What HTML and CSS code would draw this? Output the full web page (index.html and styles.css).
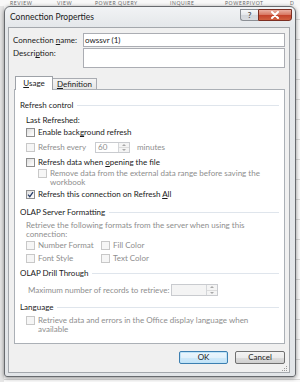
FILE: index.html
```html
<!DOCTYPE html>
<html>
<head>
<meta charset="utf-8">
<title>Connection Properties</title>
<link rel="stylesheet" href="styles.css">
</head>
<body>
<div class="screen">
  <div class="ribbon">
    <span>REVIEW</span><span>VIEW</span><span>POWER QUERY</span><span>INQUIRE</span><span>POWERPIVOT</span><span>D</span>
  </div>
  <div class="window">
    <div class="titlebar">
      <div class="title">Connection Properties</div>
      <div class="caption">
        <div class="cap-help">?</div>
        <div class="cap-close">
          <svg width="10" height="8" viewBox="0 0 10 8"><path d="M2 1 L8 7 M8 1 L2 7" stroke="#fff" stroke-width="2" stroke-linecap="round"/></svg>
        </div>
      </div>
    </div>
    <div class="client">
      <div class="field">
        <div class="label">Connection <u>n</u>ame:</div>
        <div class="textbox">owssvr (1)</div>
      </div>
      <div class="field desc">
        <div class="label">Descri<u>p</u>tion:</div>
        <div class="textbox tall"></div>
      </div>
      <div class="tabs">
        <div class="tab active"><u>U</u>sage</div>
        <div class="tab"><u>D</u>efinition</div>
      </div>
      <div class="panel">
        <div class="ghead first">Refresh control</div>
        <div class="row text-only r-last">Last Refreshed:</div>
        <div class="row r-bg"><span class="cb"></span><span>Enable back<u>g</u>round refresh</span></div>
        <div class="row r-every dis">
          <span class="cb"></span><span class="every-label">Refresh every</span>
          <span class="spin"><span class="spin-val">60</span><span class="spin-btns"><span class="arr up"></span><span class="arr down"></span></span></span>
          <span class="minutes">minutes</span>
        </div>
        <div class="row r-open"><span class="cb"></span><span>Refresh data when <u>o</u>pening the file</span></div>
        <div class="row multi sub dis r-remove"><span class="cb"></span><span class="mtext">Remove data from the external data range before saving the<br>workbook</span></div>
        <div class="row r-all"><span class="cb checked"><svg width="7" height="7" viewBox="0 0 7 7"><path d="M1 3.6 L2.8 5.6 L6 1.2" fill="none" stroke="#2a3f6b" stroke-width="1.3"/></svg></span><span>Refresh this connection on Refresh <u>A</u>ll</span></div>

        <div class="ghead g-olap">OLAP Server Formatting</div>
        <div class="row multi text-only dis r-retr"><span class="mtext">Retrieve the following formats from the server when using this<br>connection:</span></div>
        <div class="fmt-grid dis">
          <div class="row"><span class="cb"></span><span>Number Format</span></div>
          <div class="row"><span class="cb"></span><span>Fill Color</span></div>
          <div class="row"><span class="cb"></span><span>Font Style</span></div>
          <div class="row"><span class="cb"></span><span>Text Color</span></div>
        </div>

        <div class="ghead g-drill">OLAP Drill Through</div>
        <div class="row dis r-max">
          <span class="max-label">Maximum number of records to retrieve:</span>
          <span class="spin wide"><span class="spin-val"></span><span class="spin-btns"><span class="arr up"></span><span class="arr down"></span></span></span>
        </div>

        <div class="ghead g-lang">Language</div>
        <div class="row multi dis r-lang"><span class="cb"></span><span class="mtext">Retrieve data and errors in the Office display language when<br>available</span></div>
      </div>
      <div class="buttons">
        <div class="btn default">OK</div>
        <div class="btn cancel">Cancel</div>
      </div>
      <div class="grip">
        <svg width="7" height="7" viewBox="0 0 7 7">
          <rect x="5" y="1" width="1" height="1" fill="#9a9a9a"/>
          <rect x="3" y="3" width="1" height="1" fill="#9a9a9a"/>
          <rect x="5" y="3" width="1" height="1" fill="#9a9a9a"/>
          <rect x="1" y="5" width="1" height="1" fill="#9a9a9a"/>
          <rect x="3" y="5" width="1" height="1" fill="#9a9a9a"/>
          <rect x="5" y="5" width="1" height="1" fill="#9a9a9a"/>
        </svg>
      </div>
    </div>
  </div>
</div>
</body>
</html>
```
FILE: styles.css
```css
* { box-sizing: border-box; }
html, body { margin: 0; padding: 0; }
body {
  width: 300px;
  height: 382px;
  overflow: hidden;
  font-family: "Lato", "Noto Sans", sans-serif;
  font-size: 8px;
  color: #1a1a1a;
  background: #fff;
}
u { text-decoration: underline; text-underline-offset: 1px; }

.screen {
  width: 300px;
  height: 382px;
  overflow: hidden;
  background:
    linear-gradient(90deg, #e6e6e6 0, #e6e6e6 4px, transparent 4px),
    repeating-linear-gradient(180deg, #fafafa 0, #fafafa 19px, #d9d9d9 19px, #d9d9d9 20px);
}

.ribbon {
  height: 6px;
  overflow: hidden;
  display: grid;
  grid-template-columns: 47px 38px 75px 55px 65px auto;
  padding-left: 10px;
  background: #f8f8f8;
  color: #6a6a6a;
  font-size: 5px;
  line-height: 6px;
  letter-spacing: 0.6px;
}

.window {
  margin-left: 4px;
  width: 292px;
  height: 371px;
  border: 1px solid #676a6e;
  border-radius: 6px 6px 3px 3px;
  background: linear-gradient(180deg, #f1f3f5 0, #e4e7ea 20px, #e2e5e8 100%);
  box-shadow: 0 1px 4px rgba(0, 0, 0, 0.45);
  display: flex;
  flex-direction: column;
  padding: 0 5px 3px 3px;
}

.titlebar {
  height: 20px;
  display: flex;
  justify-content: space-between;
  align-items: flex-start;
  padding-left: 2px;
  margin-right: -2px;
}
.title {
  line-height: 20px;
  font-size: 8.5px;
  color: #1a1a1a;
}
.caption {
  display: flex;
  margin-top: 2px;
}
.cap-help {
  width: 18px;
  height: 12px;
  border: 1px solid #8b8f95;
  border-right: none;
  border-radius: 0 0 0 3px;
  background: linear-gradient(180deg, #f7f8f9 0, #e3e6ea 50%, #d2d6db 51%, #dadde1 100%);
  font-size: 8px;
  line-height: 10px;
  text-align: center;
  color: #555;
  font-weight: bold;
}
.cap-close {
  width: 34px;
  height: 12px;
  border: 1px solid #7b2e22;
  border-radius: 0 0 3px 0;
  background: linear-gradient(180deg, #eab0a2 0, #d97b66 45%, #c4442c 55%, #d0603f 100%);
  display: flex;
  align-items: center;
  justify-content: center;
}
.cap-close svg { display: block; }

.client {
  flex: 1;
  background: #f0f0f0;
  border: 1px solid #a3a7ac;
  padding: 5px 3px 0 4px;
  display: flex;
  flex-direction: column;
}

.field {
  display: flex;
  align-items: center;
}
.field.desc {
  align-items: flex-start;
  margin-top: 1px;
}
.label {
  width: 70px;
  line-height: 12px;
}
.field.desc .label { line-height: 10px; }
.textbox {
  width: 202px;
  height: 14px;
  border: 1px solid #abadb3;
  background: #fff;
  padding-left: 1px;
  line-height: 12px;
}
.textbox.tall { height: 20px; }

.tabs {
  display: flex;
  align-items: flex-end;
  height: 13px;
  margin-top: 8px;
  margin-left: 2px;
}
.tab {
  height: 11px;
  width: 45px;
  margin-left: -1px;
  border: 1px solid #a9acb2;
  border-bottom: none;
  background: linear-gradient(180deg, #f4f4f4, #e6e6e6);
  line-height: 10px;
  text-align: center;
}
.tab.active {
  position: relative;
  z-index: 1;
  width: 38px;
  height: 14px;
  margin-left: 0;
  margin-bottom: -1px;
  background: #fff;
  line-height: 13px;
  border-color: #9ea2a8;
}

.panel {
  margin-left: 1px;
  width: 271px;
  height: 255px;
  background: #fff;
  border: 1px solid #abb0b6;
  padding: 9px 5px 0 5px;
}

.ghead {
  height: 12px;
  display: flex;
  align-items: center;
  gap: 4px;
  white-space: nowrap;
}
.ghead::after {
  content: "";
  flex: 1;
  height: 1px;
  background: #dfe5ec;
}
.g-olap { margin-top: 6px; }
.g-drill { margin-top: 3px; }
.g-lang { margin-top: 5px; }

.row {
  display: flex;
  align-items: center;
  height: 12px;
  margin-left: 6px;
  white-space: nowrap;
}
.row.sub { margin-left: 18px; }
.row.multi {
  align-items: flex-start;
  height: 18px;
}
.mtext { line-height: 9px; }

.r-last { margin-top: 3px; }
.r-every { margin-top: 3px; }
.r-open { margin-top: 3px; }
.r-remove { margin-top: 1px; }
.r-all { margin-top: 1px; }
.r-retr { margin-top: 3px; }
.r-max { margin-top: 5px; margin-left: 8px; }
.r-lang { margin-top: 3px; }

.dis { color: #8e8e8e; }

.cb {
  flex: none;
  width: 9px;
  height: 9px;
  margin-right: 3px;
  border: 1px solid #8f8f8f;
  background: linear-gradient(135deg, #dcdcdc 0, #f4f4f4 60%, #fff 100%);
  display: flex;
  align-items: center;
  justify-content: center;
}
.dis .cb {
  border-color: #c8c8c8;
  background: #f6f6f6;
}
.cb.checked svg { display: block; }

.every-label { width: 57px; }
.spin {
  display: flex;
  width: 35px;
  height: 11px;
  border: 1px solid #c9cbcf;
  background: #fff;
}
.spin-val {
  flex: 1;
  padding-left: 2px;
  line-height: 9px;
}
.spin-btns {
  width: 11px;
  border-left: 1px solid #d4d6d9;
  display: flex;
  flex-direction: column;
  background: #f4f4f4;
}
.arr {
  flex: 1;
  display: flex;
  align-items: center;
  justify-content: center;
}
.arr.up { border-bottom: 1px solid #dcdcdc; }
.arr::before {
  content: "";
  border-left: 2px solid transparent;
  border-right: 2px solid transparent;
}
.arr.up::before { border-bottom: 2px solid #a8a8a8; }
.arr.down::before { border-top: 2px solid #a8a8a8; }
.minutes { margin-left: 7px; }

.fmt-grid {
  display: grid;
  grid-template-columns: 81px auto;
  row-gap: 1px;
}
.fmt-grid .row { margin-left: 0; }
.fmt-grid .row:nth-child(odd) { margin-left: 6px; }

.max-label { width: 143px; }
.spin.wide {
  width: 47px;
  height: 12px;
  background: #f4f4f4;
}

.buttons {
  display: flex;
  justify-content: flex-end;
  gap: 7px;
  margin-top: 7px;
  padding-right: 1px;
}
.btn {
  width: 49px;
  height: 13px;
  border: 1px solid #707070;
  border-radius: 2px;
  background: linear-gradient(180deg, #f3f3f3 0, #ebebeb 50%, #dddddd 51%, #cfcfcf 100%);
  text-align: center;
  line-height: 11px;
}
.btn.cancel { width: 50px; }
.btn.default {
  border-color: #3c7fb1;
  box-shadow: inset 0 0 0 1px #bfe3f7;
  background: linear-gradient(180deg, #eaf6fd 0, #e2f1fb 50%, #cfe9f9 51%, #c2e3f8 100%);
}

.grip {
  align-self: flex-end;
  width: 7px;
  height: 7px;
  margin-top: 1px;
  margin-right: -2px;
}
.grip svg { display: block; }
```
